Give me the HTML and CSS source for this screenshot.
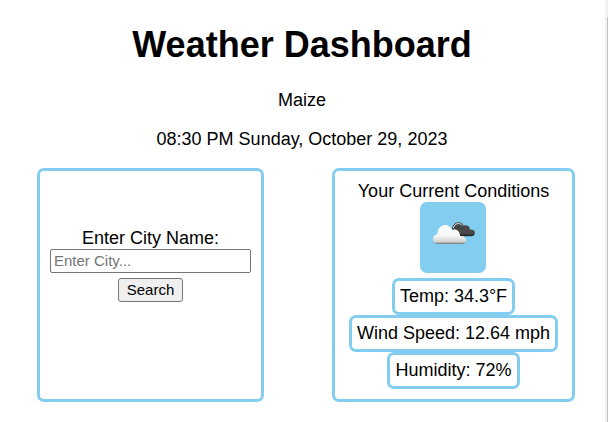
FILE: index.html
```html
<!DOCTYPE html>
<html lang="en">
<head>
<meta charset="utf-8">
<title>Weather Dashboard</title>
<link rel="stylesheet" href="styles.css">
</head>
<body>
<div class="page">
  <header class="header">
    <h1 class="title">Weather Dashboard</h1>
    <p class="line">Maize</p>
    <p class="line">08:30 PM Sunday, October 29, 2023</p>
  </header>
  <main class="panels">
    <form class="panel search">
      <label for="city">Enter City Name:</label>
      <input class="city" id="city" type="text" placeholder="Enter City...">
      <button class="submit" type="button">Search</button>
    </form>
    <section class="panel current">
      <div>Your Current Conditions</div>
      <div class="icon">
        <svg width="66" height="71" viewBox="0 0 66 71" aria-hidden="true">
          <defs>
            <linearGradient id="light" x1="0" y1="0" x2="0" y2="1"><stop offset="0" stop-color="#fff"/><stop offset=".55" stop-color="#f8f8f8"/><stop offset=".88" stop-color="#d2d2d2"/><stop offset="1" stop-color="#777"/></linearGradient>
            <linearGradient id="dark" x1="0" y1="0" x2="0" y2="1"><stop offset="0" stop-color="#666"/><stop offset=".3" stop-color="#444"/><stop offset=".75" stop-color="#4b4b4b"/><stop offset="1" stop-color="#222"/></linearGradient>
          </defs>
          <path fill="url(#dark)" d="M32 28C32 23 35 20 38.500 20c2.500 0 4 1 5 3.500 3-1 6.500 .5 6.500 4 3-.5 5 1 5 3.500 0 2-2 3.300-4 3.300H40z"/>
          <path fill="none" stroke="#d5dfe4" stroke-width="1" d="M33.500 26c.5-3 2.500-4.500 5-4.500 1.500 0 2.500.5 3.500 2"/>
          <path fill="url(#light)" d="M17.500 42c-2.500 0-4.500-2-4.500-4.500 0-3 2-5 4.500-5.500 0-5.500 3.500-9 7.500-9 3.500 0 6 2 7 5 4.500-1.500 8 1.500 8 6 3.500-.5 6 1.500 6 4.500 0 2-1.500 3.500-3.500 3.500z"/>
        </svg>
      </div>
      <div class="reading">Temp: 34.3°F</div>
      <div class="reading">Wind Speed: 12.64 mph</div>
      <div class="reading">Humidity: 72%</div>
    </section>
  </main>
</div>
<div class="track"><div class="thumb"></div></div>
</body>
</html>
```
FILE: styles.css
```css
* { box-sizing: border-box; }
body {
  margin: 0;
  height: 422px;
  display: flex;
  overflow: hidden;
  background: #fff;
  color: #000;
  font: 18px/21px "Liberation Sans", Arial, sans-serif;
}
.page { width: 605px; }
.track { width: 3px; padding: 17px 0 0 2px; background: #f1f1f1; }
.thumb { height: 405px; background: #c1c1c1; }
.header { height: 168px; padding-top: 24px; text-align: center; }
.title { margin: 0 0 25px; font-size: 36px; line-height: 41px; padding-right: 1px; }
.line { margin: 0 0 18px; padding-right: 1px; }
.panels { display: flex; gap: 68px; padding-left: 37px; }
.panel {
  height: 234px;
  display: flex;
  flex-direction: column;
  align-items: center;
  border: 3px solid #83cdf0;
  border-radius: 7px;
}
.search { width: 227px; padding-top: 57px; }
.city {
  width: 201px;
  height: 24px;
  margin: 0 0 5px;
  padding: 0 3px 2px;
  border: 1px solid #767676;
  border-radius: 2px;
  background: #fff;
  font: 15px "Liberation Sans", Arial, sans-serif;
}
.city::placeholder { color: #757575; }
.submit {
  width: 65px;
  height: 24px;
  padding: 0 0 2px;
  border: 1px solid #767676;
  border-radius: 3px;
  background: #efefef;
  color: #000;
  font: 15px "Liberation Sans", Arial, sans-serif;
}
.current { width: 243px; padding-top: 10px; }
.icon {
  width: 66px;
  height: 71px;
  margin: 0 1px 5px 0;
  border-radius: 7px;
  background: #83cdf0;
}
.icon svg { display: block; }
.reading {
  height: 37px;
  padding: 5px;
  border: 3px solid #83cdf0;
  border-radius: 7px;
}
```
